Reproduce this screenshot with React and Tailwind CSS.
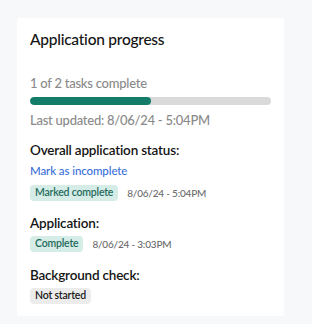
export default function App() {
  const font = { fontFamily: "Lato, 'Noto Sans', sans-serif" };
  return (
    <div className="min-h-[324px] w-[312px] bg-[#f7f8fa] pt-[18px] pl-[17px]" style={font}>
      <div className="w-[267px] h-[298px] bg-white rounded-[3px] px-[13px] pt-[11px]">
        <h2 className="text-[15.5px] leading-[20px] tracking-[-0.25px] font-medium text-[#141414]">Application progress</h2>
        <div className="mt-[26px] text-[13px] leading-[16px] tracking-[-0.25px] font-medium text-[#8a8a8a]">1 of 2 tasks complete</div>
        <div className="mt-[6px] h-[8px] w-full rounded-full bg-[#dadada] overflow-hidden">
          <div className="h-full rounded-full bg-[#137d6a]" style={{ width: "50%" }} />
        </div>
        <div className="mt-[7px] text-[13px] leading-[16px] tracking-[-0.25px] font-medium text-[#8a8a8a]">Last updated: 8/06/24 - 5:04PM</div>
        <div className="mt-[14px] text-[13.5px] leading-[16px] tracking-[-0.2px] font-semibold text-[#141414]">Overall application status:</div>
        <div className="mt-[6px] text-[11.5px] leading-[14px] tracking-[-0.1px] font-medium text-[#3b6fd8]">Mark as incomplete</div>
        <div className="mt-[7px] flex items-center gap-[9px]">
          <span className="rounded-[4px] bg-[#d6ece7] px-[5px] h-[16px] flex items-center text-[10.5px] tracking-[-0.2px] font-semibold text-[#1f6b5c]">Marked complete</span>
          <span className="text-[10px] tracking-[-0.2px] font-medium text-[#6b6b6b]">8/06/24 - 5:04PM</span>
        </div>
        <div className="mt-[14px] text-[13.5px] leading-[16px] tracking-[-0.2px] font-semibold text-[#141414]">Application:</div>
        <div className="mt-[5px] flex items-center gap-[9px]">
          <span className="rounded-[4px] bg-[#d6ece7] px-[5px] h-[16px] flex items-center text-[10.5px] tracking-[-0.2px] font-semibold text-[#1f6b5c]">Complete</span>
          <span className="text-[10px] tracking-[-0.2px] font-medium text-[#6b6b6b]">8/06/24 - 3:03PM</span>
        </div>
        <div className="mt-[15px] text-[13.5px] leading-[16px] tracking-[-0.2px] font-semibold text-[#141414]">Background check:</div>
        <div className="mt-[5px] flex items-center">
          <span className="rounded-[4px] bg-[#ececec] px-[5px] h-[16px] flex items-center text-[10.5px] tracking-[-0.2px] font-semibold text-[#1a1a1a]">Not started</span>
        </div>
      </div>
    </div>
  );
}
